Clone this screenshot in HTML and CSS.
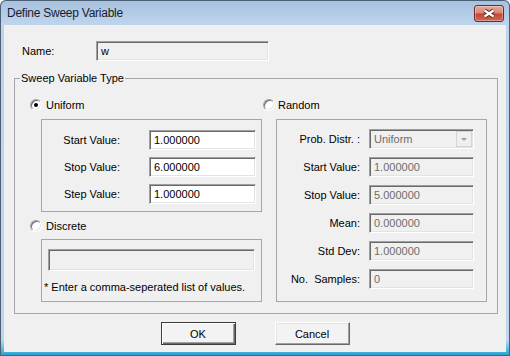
FILE: index.html
```html
<!DOCTYPE html>
<html lang="en">
<head>
    <meta charset="UTF-8">
    <title>Define Sweep Variable</title>
    <link rel="stylesheet" href="styles.css">
</head>
<body>
    <div class="window">
        <div class="titlebar">
            <span class="title">Define Sweep Variable</span>
            <button class="close">
                <svg width="28" height="15" viewBox="0 0 28 15">
                    <path d="M9.5 4.5 L18.5 10.5 M18.5 4.5 L9.5 10.5" stroke="#5a2219" stroke-width="4.2" fill="none"/>
                    <path d="M9.5 4.5 L18.5 10.5 M18.5 4.5 L9.5 10.5" stroke="#ffffff" stroke-width="2.2" fill="none"/>
                </svg>
            </button>
        </div>
        <div class="client">
            <div class="name-row">
                <span class="name-label">Name:</span>
                <input class="field field-gray name-field" value="w" readonly>
            </div>

            <fieldset class="group">
                <legend>Sweep Variable Type</legend>
                <div class="columns">
                    <div class="col-left">
                        <div class="radio-row"><span class="radio checked"></span>Uniform</div>
                        <div class="box box-uniform">
                            <div class="row"><span class="lbl">Start Value:</span><input class="field" value="1.000000"></div>
                            <div class="row"><span class="lbl">Stop Value:</span><input class="field" value="6.000000"></div>
                            <div class="row"><span class="lbl">Step Value:</span><input class="field" value="1.000000"></div>
                        </div>
                        <div class="radio-row discrete-row"><span class="radio"></span>Discrete</div>
                        <div class="box box-discrete">
                            <input class="field field-gray list-field" readonly>
                            <p class="note">* Enter a comma-seperated list of values.</p>
                        </div>
                    </div>
                    <div class="col-right">
                        <div class="radio-row random-row"><span class="radio"></span>Random</div>
                        <div class="box box-random">
                            <div class="row"><span class="lbl">Prob. Distr. :</span>
                                <div class="combo"><span>Uniform</span><span class="arrow"></span></div>
                            </div>
                            <div class="row"><span class="lbl">Start Value:</span><input class="field field-off" value="1.000000" disabled></div>
                            <div class="row"><span class="lbl">Stop Value:</span><input class="field field-off" value="5.000000" disabled></div>
                            <div class="row"><span class="lbl">Mean:</span><input class="field field-off" value="0.000000" disabled></div>
                            <div class="row"><span class="lbl">Std Dev:</span><input class="field field-off" value="1.000000" disabled></div>
                            <div class="row"><span class="lbl">No.&nbsp; Samples:</span><input class="field field-off" value="0" disabled></div>
                        </div>
                    </div>
                </div>
            </fieldset>

            <div class="buttons">
                <button class="btn btn-default">OK</button>
                <button class="btn">Cancel</button>
            </div>
        </div>
    </div>
</body>
</html>
```

FILE: styles.css
```css
* {
    box-sizing: border-box;
}
body {
    margin: 0;
    font-family: "Liberation Sans", Arial, sans-serif;
    font-size: 11px;
    color: #000;
    background: #fff;
}
.window {
    width: 510px;
    height: 356px;
    display: flex;
    flex-direction: column;
    background: linear-gradient(to bottom, #a6c1de 0, #bdd4ec 24px, #bfd5ec 340px, #3fb4de 352px, #2f9cc8 355px, #1d3f55 356px);
    border-radius: 6px 6px 0 0;
    box-shadow: inset 0 0 0 1px #4e6074;
}
.titlebar {
    height: 25px;
    display: flex;
    justify-content: space-between;
    align-items: flex-start;
    padding: 0 6px 0 7px;
}
.title {
    margin-top: 6px;
    font-size: 12px;
    letter-spacing: -0.25px;
    color: #1c1c2c;
}
.close {
    margin-top: 5px;
    width: 30px;
    height: 17px;
    padding: 0;
    border: 1px solid #6d2a20;
    border-radius: 3px;
    background: linear-gradient(to bottom, #e6aa9e, #d88676 45%, #c24832 55%, #cd6a55);
    box-shadow: inset 0 0 0 1px rgba(255, 255, 255, 0.35);
}
.close svg {
    display: block;
}
.client {
    flex: 1;
    margin: 0 4px 4px 4px;
    background: #f0f0f0;
    display: flex;
    flex-direction: column;
}

/* inputs */
.field {
    font: inherit;
    color: #000;
    height: 20px;
    padding: 0 4px;
    background: #fff;
    border: 1px solid;
    border-color: #a0a0a0 #fff #fff #a0a0a0;
    box-shadow: inset 1px 1px #696969, inset -1px -1px #e3e3e3;
    outline: none;
}
.field-gray {
    background: #f0f0f0;
}
.field-off {
    background: #f0f0f0;
    color: #6d6d6d;
}

.name-row {
    display: flex;
    align-items: center;
    margin-top: 16px;
    padding-left: 18px;
}
.name-label {
    width: 74px;
}
.name-field {
    width: 173px;
}

.group {
    margin: 11px 0 0 10px;
    width: 484px;
    padding: 12px 0 11px 5px;
    border: 1px solid #a6a6a6;
    min-width: 0;
}
.group legend {
    padding: 0 1px;
    line-height: 13px;
}
.columns {
    display: grid;
    grid-template-columns: 232px 1fr;
    padding-left: 10px;
}
.radio-row {
    height: 16px;
    display: flex;
    align-items: center;
    gap: 4px;
}
.radio {
    width: 12px;
    height: 12px;
    border-radius: 50%;
    background: #fff;
    border: 1px solid;
    border-color: #a0a0a0 #fff #fff #a0a0a0;
    box-shadow: inset 1px 1px #696969, inset -1px -1px #e3e3e3;
    position: relative;
}
.radio.checked::after {
    content: "";
    position: absolute;
    left: 3px;
    top: 3px;
    width: 4px;
    height: 4px;
    border-radius: 50%;
    background: #000;
}
.random-row {
    padding-left: 1px;
    gap: 3px;
}
.discrete-row {
    margin-top: 6px;
}

.box {
    border: 1px solid #a6a6a6;
}
.box-uniform {
    margin: 6px 0 0 11px;
    width: 221px;
    padding: 10px 0 7px 0;
    display: flex;
    flex-direction: column;
    gap: 7px;
}
.row {
    display: flex;
    align-items: center;
}
.box-uniform .lbl {
    width: 78px;
    text-align: right;
    margin-right: 29px;
}
.box-uniform .field {
    width: 107px;
}
.box-discrete {
    margin: 5px 0 0 11px;
    width: 221px;
    padding: 9px 0 7px 2px;
}
.list-field {
    display: block;
    margin-left: 4px;
    width: 207px;
    height: 22px;
}
.note {
    margin: 9px 0 0 0;
    line-height: 14px;
}

.box-random {
    margin: 6px 0 0 14px;
    width: 211px;
    padding: 9px 0 12px 0;
    display: flex;
    flex-direction: column;
    gap: 8px;
}
.box-random .lbl {
    width: 83px;
    text-align: right;
    margin-right: 9px;
}
.box-random .field {
    width: 105px;
}
.combo {
    width: 105px;
    height: 20px;
    display: flex;
    align-items: center;
    justify-content: space-between;
    padding: 0 1px 0 4px;
    color: #6d6d6d;
    background: #f0f0f0;
    border: 1px solid;
    border-color: #a0a0a0 #fff #fff #a0a0a0;
    box-shadow: inset 1px 1px #696969, inset -1px -1px #e3e3e3;
}
.arrow {
    width: 16px;
    height: 16px;
    border: 1px solid #d4d4d4;
    background: #f0f0f0;
    position: relative;
}
.arrow::after {
    content: "";
    position: absolute;
    left: 4px;
    top: 6px;
    border-left: 3px solid transparent;
    border-right: 3px solid transparent;
    border-top: 3px solid #a0a0a0;
}

.buttons {
    display: flex;
    justify-content: center;
    gap: 39px;
    margin-top: 8px;
}
.btn {
    width: 75px;
    height: 23px;
    font: inherit;
    color: #000;
    padding: 0;
    background: #f3f3f3;
    border: 1px solid;
    border-color: #fff #696969 #696969 #fff;
    box-shadow: inset -1px -1px #a0a0a0, inset 1px 1px #e3e3e3;
}
.btn-default {
    border: 1px solid #3c3c3c;
    box-shadow: inset 1px 1px #fff, inset -1px -1px #696969, inset -2px -2px #a0a0a0;
}
```
